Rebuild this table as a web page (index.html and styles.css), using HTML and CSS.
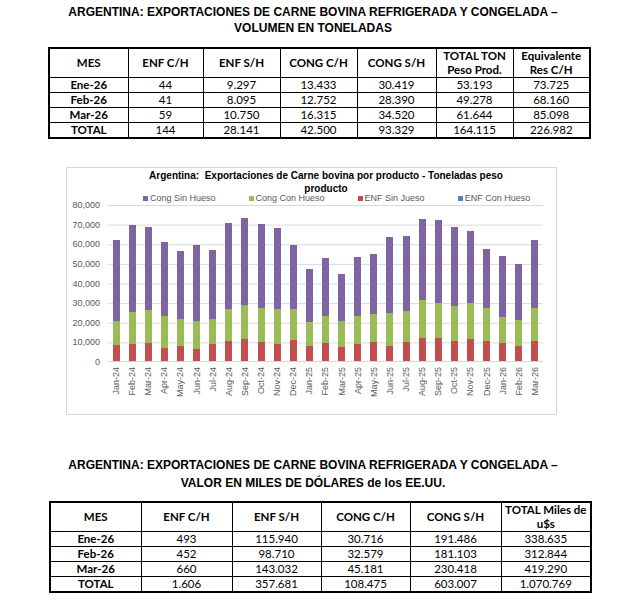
FILE: index.html
```html
<html>
<head>
    <title>Exportaciones de carne bovina</title>
    <link rel="stylesheet" href="styles.css">
</head>
<body>
    <div class="page">
        <h1 class="title">ARGENTINA: EXPORTACIONES DE CARNE BOVINA REFRIGERADA Y CONGELADA –<br>VOLUMEN EN TONELADAS</h1>
        <table class="data vol">
            <colgroup>
                <col class="c79"><col class="c75"><col class="c77"><col class="c77"><col class="c79"><col class="c77"><col class="c77">
            </colgroup>
            <tr><th>MES</th><th>ENF C/H</th><th>ENF S/H</th><th>CONG C/H</th><th>CONG S/H</th><th>TOTAL TON<br>Peso Prod.</th><th>Equivalente<br>Res C/H</th></tr>
            <tr><td>Ene-26</td><td>44</td><td>9.297</td><td>13.433</td><td>30.419</td><td>53.193</td><td>73.725</td></tr>
            <tr><td>Feb-26</td><td>41</td><td>8.095</td><td>12.752</td><td>28.390</td><td>49.278</td><td>68.160</td></tr>
            <tr><td>Mar-26</td><td>59</td><td>10.750</td><td>16.315</td><td>34.520</td><td>61.644</td><td>85.098</td></tr>
            <tr><td>TOTAL</td><td>144</td><td>28.141</td><td>42.500</td><td>93.329</td><td>164.115</td><td>226.982</td></tr>
        </table>

        <div class="chart">
            <div class="chart-title">Argentina:&nbsp; Exportaciones de Carne bovina por producto - Toneladas peso<br>producto</div>
            <div class="legend">
                <span><i class="swatch cong-sh"></i>Cong Sin Hueso</span>
                <span><i class="swatch cong-ch"></i>Cong Con Hueso</span>
                <span><i class="swatch enf-sh"></i>ENF Sin Jueso</span>
                <span><i class="swatch enf-ch"></i>ENF Con Hueso</span>
            </div>
            <div class="plot-grid">
                <div class="yaxis">
                    <span>80,000</span><span>70,000</span><span>60,000</span><span>50,000</span><span>40,000</span>
                    <span>30,000</span><span>20,000</span><span>10,000</span><span>0</span>
                </div>
                <div class="plot" id="plot"></div>
                <div class="xaxis" id="xaxis"></div>
            </div>
        </div>

        <h1 class="title title-value">ARGENTINA: EXPORTACIONES DE CARNE BOVINA REFRIGERADA Y CONGELADA –<br>VALOR EN MILES DE DÓLARES de los EE.UU.</h1>
        <table class="data val">
            <colgroup>
                <col class="c91"><col class="c91"><col class="c89"><col class="c89"><col class="c91"><col class="c90">
            </colgroup>
            <tr><th>MES</th><th>ENF C/H</th><th>ENF S/H</th><th>CONG C/H</th><th>CONG S/H</th><th>TOTAL Miles de<br>u$s</th></tr>
            <tr><td>Ene-26</td><td>493</td><td>115.940</td><td>30.716</td><td>191.486</td><td>338.635</td></tr>
            <tr><td>Feb-26</td><td>452</td><td>98.710</td><td>32.579</td><td>181.103</td><td>312.844</td></tr>
            <tr><td>Mar-26</td><td>660</td><td>143.032</td><td>45.181</td><td>230.418</td><td>419.290</td></tr>
            <tr><td>TOTAL</td><td>1.606</td><td>357.681</td><td>108.475</td><td>603.007</td><td>1.070.769</td></tr>
        </table>
    </div>
    <script>
        // miles de toneladas: total, tope cong c/h, tope enf s/h
        const series = [
            ['Jan-24', 61.8, 20.4, 8.2], ['Feb-24', 69.1, 25.2, 8.5], ['Mar-24', 68.1, 26.0, 9.0],
            ['Apr-24', 60.6, 23.0, 6.8], ['May-24', 56.2, 21.4, 7.7], ['Jun-24', 58.9, 20.4, 6.1],
            ['Jul-24', 56.7, 21.4, 8.5], ['Aug-24', 70.3, 26.6, 10.4], ['Sep-24', 72.8, 28.3, 11.2],
            ['Oct-24', 69.8, 27.2, 9.5], ['Nov-24', 67.7, 26.6, 8.9], ['Dec-24', 58.9, 26.6, 10.7],
            ['Jan-25', 46.8, 20.1, 7.7], ['Feb-25', 52.4, 23.1, 9.4], ['Mar-25', 44.4, 20.4, 7.3],
            ['Apr-25', 53.1, 23.0, 8.7], ['May-25', 54.8, 23.8, 9.5], ['Jun-25', 63.1, 24.7, 7.7],
            ['Jul-25', 63.8, 25.5, 9.5], ['Aug-25', 72.4, 31.1, 11.9], ['Sep-25', 72.0, 29.8, 11.6],
            ['Oct-25', 68.4, 28.3, 10.2], ['Nov-25', 66.4, 29.8, 11.2], ['Dec-25', 57.2, 26.9, 10.2],
            ['Jan-26', 53.3, 22.6, 9.0], ['Feb-26', 49.4, 20.9, 7.8], ['Mar-26', 61.8, 26.9, 10.4]
        ];
        const scale = 157 / 80;

        const plot = document.getElementById('plot');
        const xaxis = document.getElementById('xaxis');

        for (const [month, total, congCh, enfSh] of series) {
            const bar = document.createElement('div');
            bar.className = 'bar';
            const parts = [['enf-sh', enfSh], ['cong-ch', congCh - enfSh], ['cong-sh', total - congCh]];
            for (const [cls, value] of parts) {
                const seg = document.createElement('div');
                seg.className = cls;
                seg.style.height = (value * scale).toFixed(1) + 'px';
                bar.appendChild(seg);
            }
            plot.appendChild(bar);

            const label = document.createElement('span');
            label.innerText = month;
            xaxis.appendChild(label);
        }
    </script>
</body>
</html>
```

FILE: styles.css
```css
html, body {
    margin: 0;
    padding: 0;
    background: #fff;
    color: #000;
}

.page {
    width: 632px;
    padding-top: 4px;
}

.title {
    margin: 0;
    padding-right: 6px;
    font: bold 12px/16px "Liberation Sans", Arial, sans-serif;
    text-align: center;
}

.title-value {
    margin-top: 41px;
    line-height: 18px;
}

.data {
    border-collapse: collapse;
    table-layout: fixed;
    width: 541px;
    margin: 11px 0 0 48px;
    border: 2px solid #000;
    font: 11.5px "Lato", sans-serif;
}

.data.val {
    margin: 9px 0 0 49px;
}

.data th,
.data td {
    border: 1px solid #000;
    padding: 0;
    text-align: center;
    height: 14px;
    line-height: 14px;
}

.data th {
    height: 29px;
    font-weight: bold;
}

.data td:first-child {
    font-weight: bold;
}

.c75 { width: 75px; }
.c77 { width: 77px; }
.c79 { width: 79px; }
.c89 { width: 89px; }
.c90 { width: 90px; }
.c91 { width: 91px; }

.chart {
    width: 489px;
    height: 246px;
    margin: 28px 0 0 66px;
    border: 1px solid #d9d9d9;
    font-family: "Liberation Sans", Arial, sans-serif;
    color: #595959;
}

.chart-title {
    padding: 1px 12px 0 41px;
    font-size: 10px;
    font-weight: bold;
    line-height: 13px;
    color: #000;
    text-align: center;
}

.legend {
    display: flex;
    gap: 33px;
    padding-left: 76px;
    margin-top: -2px;
    font-size: 9px;
    line-height: 10px;
}

.swatch {
    display: inline-block;
    width: 5px;
    height: 5px;
    margin-right: 2px;
}

.cong-sh { background: #8064a2; }
.cong-ch { background: #9bbb59; }
.enf-sh { background: #c0504d; }
.enf-ch { background: #4f81bd; }

.plot-grid {
    display: grid;
    grid-template-columns: 41px 435px;
    grid-template-rows: 157px auto;
    margin-top: 2px;
}

.yaxis {
    display: flex;
    flex-direction: column;
    justify-content: space-between;
    height: 167px;
    margin-top: -5px;
    padding-right: 8px;
    font-size: 9px;
    line-height: 10px;
    text-align: right;
}

.plot {
    display: grid;
    grid-template-columns: repeat(27, 1fr);
    align-items: end;
    background-image: linear-gradient(#d9d9d9 1px, transparent 1px);
    background-size: 100% 19.625px;
    border-bottom: 1px solid #d9d9d9;
}

.bar {
    width: 7px;
    justify-self: center;
    display: flex;
    flex-direction: column-reverse;
}

.xaxis {
    grid-column: 2;
    display: grid;
    grid-template-columns: repeat(27, 1fr);
    align-items: start;
    padding-top: 5px;
}

.xaxis span {
    justify-self: center;
    writing-mode: vertical-rl;
    transform: rotate(180deg);
    font-size: 9px;
    line-height: 10px;
}
```
